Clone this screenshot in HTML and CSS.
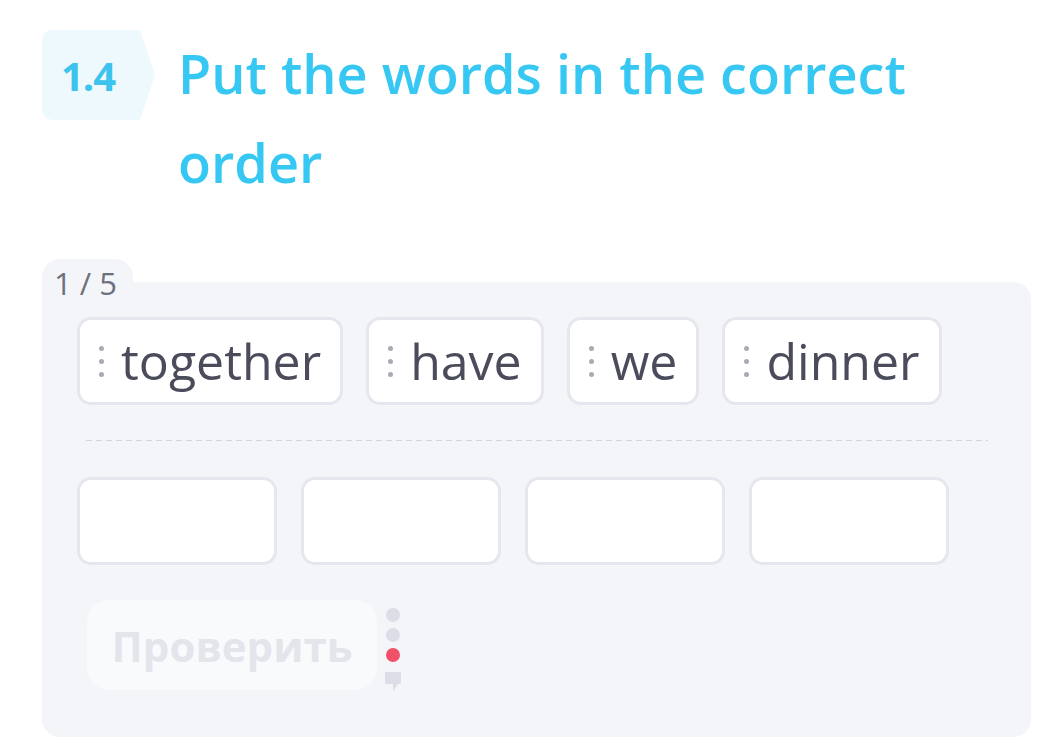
FILE: index.html
```html
<html>

<head>
    <meta http-equiv="Content-Type" content="text/html; charset=UTF-8">
    <link rel="stylesheet" href="styles.css">
</head>

<body>
    <div class="content">
        <header>
            <div class="badge">
                <svg class="badge-shape" width="114" height="90" viewBox="0 0 114 90">
                    <path d="M12 0 H98 L113 45 L98 90 H12 Q0 90 0 78 V12 Q0 0 12 0 Z" fill="#eef9fd" />
                </svg>
                <span class="badge-text">1.4</span>
            </div>
            <h1>Put the words in the correct order</h1>
        </header>

        <div class="task">
            <div class="tab">1 / 5</div>
            <div class="card">
                <div class="words">
                    <div class="word"><span class="grip"><i></i><i></i><i></i></span>together</div>
                    <div class="word"><span class="grip"><i></i><i></i><i></i></span>have</div>
                    <div class="word"><span class="grip"><i></i><i></i><i></i></span>we</div>
                    <div class="word"><span class="grip"><i></i><i></i><i></i></span>dinner</div>
                </div>

                <div class="divider"></div>

                <div class="slots">
                    <div class="slot"></div>
                    <div class="slot"></div>
                    <div class="slot"></div>
                    <div class="slot"></div>
                </div>

                <div class="actions">
                    <button class="check">Проверить</button>
                    <div class="status">
                        <span class="dot"></span>
                        <span class="dot"></span>
                        <span class="dot dot-active"></span>
                        <svg class="bubble" width="16" height="19" viewBox="0 0 16 19">
                            <path d="M0 1 Q0 0 1 0 H15 Q16 0 16 1 V11 Q16 12 15 12 H13 L8 19 V12 H1 Q0 12 0 11 Z" fill="#dcdde6" />
                        </svg>
                    </div>
                </div>
            </div>
        </div>
    </div>
</body>

</html>
```

FILE: styles.css
```css
body {
    margin: 0;
    background: #ffffff;
}

.content {
    font-family: "Open Sans", sans-serif;
    padding: 30px 11px 10px 42px;
}

header {
    display: flex;
    align-items: flex-start;
}

.badge {
    position: relative;
    width: 114px;
    height: 90px;
    flex-shrink: 0;
    display: flex;
    align-items: center;
}

.badge-shape {
    position: absolute;
    top: 0;
    left: 0;
}

.badge-text {
    position: relative;
    margin-left: 19px;
    font-size: 40px;
    font-weight: bold;
    color: #3cc3ee;
    letter-spacing: -1px;
}

h1 {
    margin: -1px 0 0 22px;
    font-size: 54px;
    line-height: 89px;
    font-weight: 600;
    color: #36c8f2;
    max-width: 780px;
}

.task {
    margin-top: 52px;
}

.tab {
    display: inline-block;
    height: 44px;
    line-height: 48px;
    padding: 0 16px 0 12px;
    background: #f4f5f9;
    border-radius: 18px 18px 0 0;
    font-size: 31px;
    font-weight: 500;
    color: #6d707d;
}

.card {
    margin-top: -21px;
    background: #f4f5f9;
    border-radius: 0 18px 18px 18px;
    padding: 35px 35px 46px 35px;
}

.words,
.slots {
    display: flex;
    gap: 24px;
}

.words {
    gap: 23px;
}

.word {
    display: flex;
    align-items: center;
    height: 82px;
    padding: 0 19px 0 19px;
    background: #ffffff;
    border: 3px solid #e6e7ee;
    border-radius: 14px;
    font-size: 50px;
    color: #4b4c5b;
}

.grip {
    display: flex;
    flex-direction: column;
    gap: 8px;
    margin-right: 17px;
}

.grip i {
    width: 5px;
    height: 5px;
    border-radius: 50%;
    background: #a9aab3;
}

.divider {
    margin: 35px 8px 36px 9px;
    height: 1px;
    background: linear-gradient(to right, #d3d5dc 6px, transparent 6px) 0 0 / 10px 1px repeat-x;
}

.slot {
    width: 194px;
    height: 82px;
    background: #ffffff;
    border: 3px solid #e6e7ee;
    border-radius: 14px;
}

.actions {
    display: flex;
    align-items: flex-start;
    margin-top: 35px;
    margin-left: 10px;
}

.check {
    width: 290px;
    height: 90px;
    border: none;
    border-radius: 22px;
    background: #f9fafc;
    font-family: "Open Sans", sans-serif;
    font-size: 42px;
    font-weight: bold;
    color: #e4e5eb;
    padding: 0;
}

.status {
    display: flex;
    flex-direction: column;
    align-items: center;
    gap: 6px;
    margin: 8px 0 0 8px;
}

.dot {
    width: 14px;
    height: 14px;
    border-radius: 50%;
    background: #dcdde6;
}

.dot-active {
    background: #ef5268;
}

.bubble {
    margin-top: 4px;
}
```
